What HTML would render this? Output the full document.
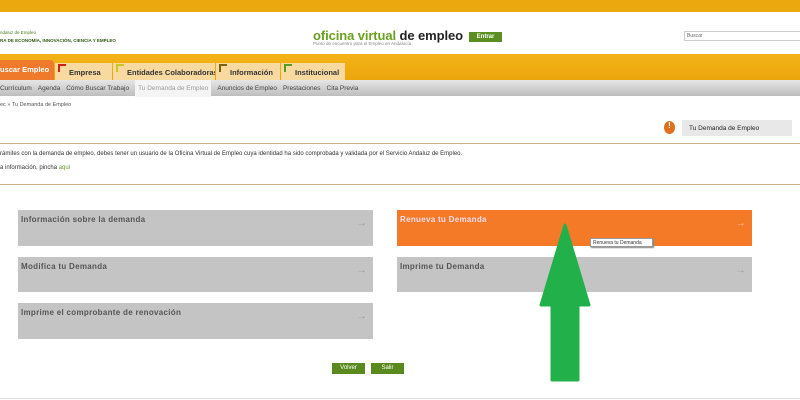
<!DOCTYPE html>
<html><head><meta charset="utf-8"><style>
*{margin:0;padding:0;box-sizing:border-box}
body{width:800px;height:400px;overflow:hidden;background:#fff;font-family:"Liberation Sans",sans-serif;position:relative}
.a{position:absolute;white-space:nowrap}
.box{position:absolute;background:#c4c4c4;color:#555;font-size:8px;font-weight:bold;padding:5px 3px;letter-spacing:.3px}
.box .ar{position:absolute;right:6px;top:8px;font-size:10px;color:#999;font-weight:normal}
.tab{position:absolute;top:63px;height:17px;background:#f8d9a0;font-size:7.5px;font-weight:bold;color:#333;padding:5px 0 0 14px;white-space:nowrap;overflow:hidden}
.tab i{position:absolute;left:3px;top:1px;width:8px;height:8px;border-left:2px solid;border-top:2px solid}
.menu span{margin-right:6px}
.btn{position:absolute;top:363px;height:11px;background:#5a8a1e;color:#fff;font-size:6px;text-align:center;line-height:11px}
</style></head><body>
<div class="a" style="left:0;top:0;width:800px;height:12px;background:#eba90f"></div>
<div class="a" style="left:0;top:30px;font-size:4.5px;color:#4a7a20">ndaluz de Empleo</div>
<div class="a" style="left:0;top:38px;font-size:4.5px;color:#2d5a10;font-weight:bold">RA DE ECONOMÍA, INNOVACIÓN, CIENCIA Y EMPLEO</div>
<div class="a" style="left:313px;top:28px;font-size:13px;font-weight:bold;color:#6aa020;letter-spacing:-.1px">oficina virtual <span style="color:#222">de empleo</span></div>
<div class="a" style="left:313px;top:41px;font-size:4.5px;color:#888">Punto de encuentro para el Empleo en Andalucía</div>
<div class="a" style="left:469px;top:32px;width:33px;height:10px;background:#5c8f22;color:#fff;font-size:6px;text-align:center;line-height:10px;font-weight:bold">Entrar</div>
<div class="a" style="left:684px;top:31px;width:120px;height:10px;border:1px solid #ccc;font-size:5px;color:#666;padding:1px 2px">Buscar</div>
<div class="a" style="left:0;top:54px;width:800px;height:26px;background:linear-gradient(#f3b418,#eba50c)"></div>
<div class="a" style="left:0;top:60px;width:54px;height:20px;background:#f07a2c;border-radius:0 4px 0 0;color:#fff;font-size:7.5px;font-weight:bold;padding:5px 0 0 0">uscar Empleo</div>
<div class="tab" style="left:55px;width:57px"><i style="border-color:#d02010"></i>Empresa</div>
<div class="tab" style="left:113px;width:102px"><i style="border-color:#c8c820"></i>Entidades Colaboradoras</div>
<div class="tab" style="left:216px;width:64px"><i style="border-color:#7a6010"></i>Información</div>
<div class="tab" style="left:281px;width:64px"><i style="border-color:#5a9a20"></i>Institucional</div>
<div class="a menu" style="left:0;top:80px;width:800px;height:16px;background:linear-gradient(#e6e6e6,#bdbdbd);font-size:6.5px;color:#444;padding:5px 0 0 0;white-space:nowrap"><span>Currículum</span><span>Agenda</span><span>Cómo Buscar Trabajo</span><span style="background:#f4f4f4;color:#999;padding:5px 3px">Tu Demanda de Empleo</span><span>Anuncios de Empleo</span><span>Prestaciones</span><span>Cita Previa</span></div>
<div class="a" style="left:0;top:102px;font-size:5.5px;color:#555">ec » Tu Demanda de Empleo</div>
<div class="a" style="left:664px;top:121px;width:11px;height:13px;border-radius:50%;background:#e07020;color:#fff;font-size:8px;text-align:center;font-weight:bold">!</div>
<div class="a" style="left:682px;top:120px;width:110px;height:16px;background:#e8e8e8;font-size:6.5px;padding:5px 7px;color:#222">Tu Demanda de Empleo</div>
<div class="a" style="left:0;top:143px;width:800px;height:42px;border-top:1px solid #c9b08a;border-bottom:1px solid #c9b08a"></div>
<div class="a" style="left:0;top:151px;font-size:6px;color:#333">rámites con la demanda de empleo, debes tener un usuario de la Oficina Virtual de Empleo cuya identidad ha sido comprobada y validada por el Servicio Andaluz de Empleo.</div>
<div class="a" style="left:0;top:165px;font-size:6px;color:#333">a información, pincha <span style="color:#6a9a30">aquí</span></div>
<div class="box" style="left:18px;top:210px;width:355px;height:36px">Información sobre la demanda<span class="ar">→</span></div>
<div class="box" style="left:18px;top:257px;width:355px;height:35px">Modifica tu Demanda<span class="ar">→</span></div>
<div class="box" style="left:18px;top:303px;width:355px;height:36px">Imprime el comprobante de renovación<span class="ar">→</span></div>
<div class="box" style="left:397px;top:210px;width:355px;height:36px;background:#f47a28;color:#fde">Renueva tu Demanda<span class="ar" style="color:#fbb">→</span></div>
<div class="box" style="left:397px;top:257px;width:355px;height:35px">Imprime tu Demanda<span class="ar">→</span></div>
<div class="a" style="left:590px;top:238px;width:63px;height:9px;background:#fff;border:1px solid #999;font-size:5px;color:#333;padding:1px 2px;box-shadow:1px 1px 1px #888">Renueva tu Demanda</div>
<svg class="a" style="left:535px;top:220px" width="60" height="165"><path d="M30 5 L54 85 L43 85 L43 160 L17 160 L17 85 L6 85 Z" fill="#22b04b" stroke="#22b04b" stroke-width="3" stroke-linejoin="round"/></svg>
<div class="btn" style="left:332px;width:33px">Volver</div>
<div class="btn" style="left:371px;width:33px">Salir</div>
<div class="a" style="left:0;top:398px;width:800px;height:1px;background:#ddd"></div>
</body></html>
